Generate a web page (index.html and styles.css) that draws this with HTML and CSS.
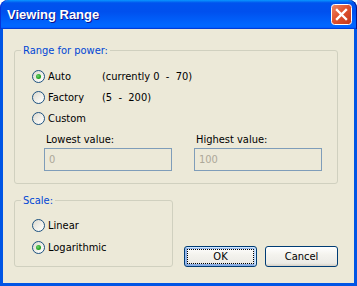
FILE: index.html
```html
<!DOCTYPE html>
<html lang="en">
<head>
  <meta charset="UTF-8" />
  <title>Viewing Range</title>
  <link rel="stylesheet" href="styles.css">
</head>
<body>
  <div class="window">
    <div class="titlebar">
      <span class="title">Viewing Range</span>
      <button class="close" aria-label="Close">
        <svg width="21" height="21" viewBox="0 0 21 21">
          <defs>
            <linearGradient id="closeFill" x1="0" y1="0" x2="1" y2="1">
              <stop offset="0" stop-color="#f08a6a" />
              <stop offset="0.45" stop-color="#e0532f" />
              <stop offset="1" stop-color="#c2361a" />
            </linearGradient>
          </defs>
          <rect x="0.5" y="0.5" width="20" height="20" rx="3" fill="url(#closeFill)" stroke="#fff" />
          <path d="M6 6 L15 15 M15 6 L6 15" stroke="#fff" stroke-width="2.4" stroke-linecap="square" />
        </svg>
      </button>
    </div>

    <div class="dialog-body">
      <fieldset class="group group-range">
        <legend>Range for power:</legend>
        <div class="options">
          <label class="option">
            <span class="radio checked"></span>
            <span class="option-name">Auto</span>
            <span class="hint">(currently 0&nbsp; - &nbsp;70)</span>
          </label>
          <label class="option">
            <span class="radio"></span>
            <span class="option-name">Factory</span>
            <span class="hint">(5&nbsp; - &nbsp;200)</span>
          </label>
          <label class="option">
            <span class="radio"></span>
            <span class="option-name">Custom</span>
          </label>
        </div>
        <div class="limits">
          <div class="limit">
            <span class="limit-label">Lowest value:</span>
            <input type="text" value="0" disabled />
          </div>
          <div class="limit">
            <span class="limit-label">Highest value:</span>
            <input type="text" value="100" disabled />
          </div>
        </div>
      </fieldset>

      <div class="bottom-row">
        <fieldset class="group group-scale">
          <legend>Scale:</legend>
          <div class="options scale-options">
            <label class="option">
              <span class="radio"></span>
              <span class="option-name">Linear</span>
            </label>
            <label class="option">
              <span class="radio checked"></span>
              <span class="option-name">Logarithmic</span>
            </label>
          </div>
        </fieldset>
        <div class="actions">
          <button class="btn btn-default">OK</button>
          <button class="btn">Cancel</button>
        </div>
      </div>
    </div>
  </div>
</body>
</html>
```

FILE: styles.css
```css
:root {
  --xp-face: #ece9d8;
  --xp-blue: #0055e5;
  --xp-legend: #0046d5;
  --xp-group-border: #d0d0bf;
}

body {
  margin: 0;
  background: #fff;
  font-family: 'DejaVu Sans Condensed', 'Liberation Sans', Arial, sans-serif;
  font-size: 11px;
  color: #000;
}

.window {
  width: 357px;
  height: 286px;
  display: flex;
  flex-direction: column;
}

.titlebar {
  height: 29px;
  box-sizing: border-box;
  display: flex;
  align-items: center;
  justify-content: space-between;
  padding: 0 5px 1px 7px;
  border-radius: 8px 8px 0 0;
  background: linear-gradient(180deg, #0997ff 0%, #0053ee 10%, #0050ee 40%, #0066ff 85%, #0066ff 92%, #005bff 95%, #003dd7 97%, #003dd7 100%);
  box-shadow: inset 1px 0 #0831d9, inset -1px 0 #00138c;
}

.title {
  font-family: 'Liberation Sans', Arial, sans-serif;
  font-weight: bold;
  font-size: 13px;
  color: #fff;
  text-shadow: 1px 1px #0f1089;
}

.close {
  width: 21px;
  height: 21px;
  padding: 0;
  border: none;
  background: none;
  display: block;
  margin-top: 1px;
}

.close svg {
  display: block;
}

.dialog-body {
  flex: 1;
  background: var(--xp-face);
  border: 3px solid var(--xp-blue);
  border-top: 0;
  padding: 15px 16px 16px 11px;
}

.group {
  margin: 0;
  padding: 0;
  border: 1px solid var(--xp-group-border);
  border-radius: 3px;
  min-inline-size: 0;
}

.group legend {
  margin-left: 6px;
  padding: 0 2px;
  line-height: 13px;
  color: var(--xp-legend);
}

.group-range {
  width: 324px;
  box-sizing: border-box;
  padding-bottom: 12px;
}

.options {
  padding: 9px 0 0 17px;
}

.option {
  display: flex;
  align-items: center;
  height: 21px;
}

.radio {
  width: 13px;
  height: 13px;
  box-sizing: border-box;
  border: 1px solid #1c5180;
  border-radius: 50%;
  background: linear-gradient(135deg, #dcd9ce 0%, #f3f2ec 60%, #fff 100%);
  display: flex;
  align-items: center;
  justify-content: center;
  flex-shrink: 0;
}

.radio.checked::after {
  content: "";
  width: 5px;
  height: 5px;
  border-radius: 50%;
  background: radial-gradient(circle at 40% 40%, #6fd36f 0%, #21a121 60%, #1a8a1a 100%);
}

.option-name {
  margin-left: 3px;
  width: 54px;
  white-space: nowrap;
}

.limits {
  display: flex;
  gap: 22px;
  padding: 4px 0 0 29px;
}

.limit {
  display: flex;
  flex-direction: column;
  gap: 2px;
  width: 128px;
}

.limit-label {
  line-height: 13px;
  padding-left: 2px;
}

.limit input {
  height: 23px;
  box-sizing: border-box;
  margin: 0;
  border: 1px solid #7f9db9;
  background: var(--xp-face);
  color: #aca899;
  font: inherit;
  padding: 0 4px;
}

.bottom-row {
  display: flex;
  align-items: flex-end;
  margin-top: 10px;
}

.group-scale {
  width: 159px;
  box-sizing: border-box;
  padding-bottom: 8px;
}

.scale-options {
  padding-top: 7px;
}

.scale-options .option {
  height: 22px;
}

.actions {
  margin-left: auto;
  display: flex;
  gap: 8px;
}

.btn {
  width: 73px;
  height: 21px;
  box-sizing: border-box;
  border: 1px solid #003c74;
  border-radius: 3px;
  background: linear-gradient(180deg, #fff 0%, #f4f3ee 40%, #ecebe6 85%, #d6d0c5 100%);
  font: inherit;
  color: #000;
  padding: 0;
}

.btn-default {
  box-shadow: inset -1px 1px #cee7ff, inset 1px 2px #98b8ea, inset -2px 2px #bcd4f6, inset 1px -1px #89ade4, inset 2px -2px #89ade4;
  outline: 1px dotted #000;
  outline-offset: -4px;
}
```
